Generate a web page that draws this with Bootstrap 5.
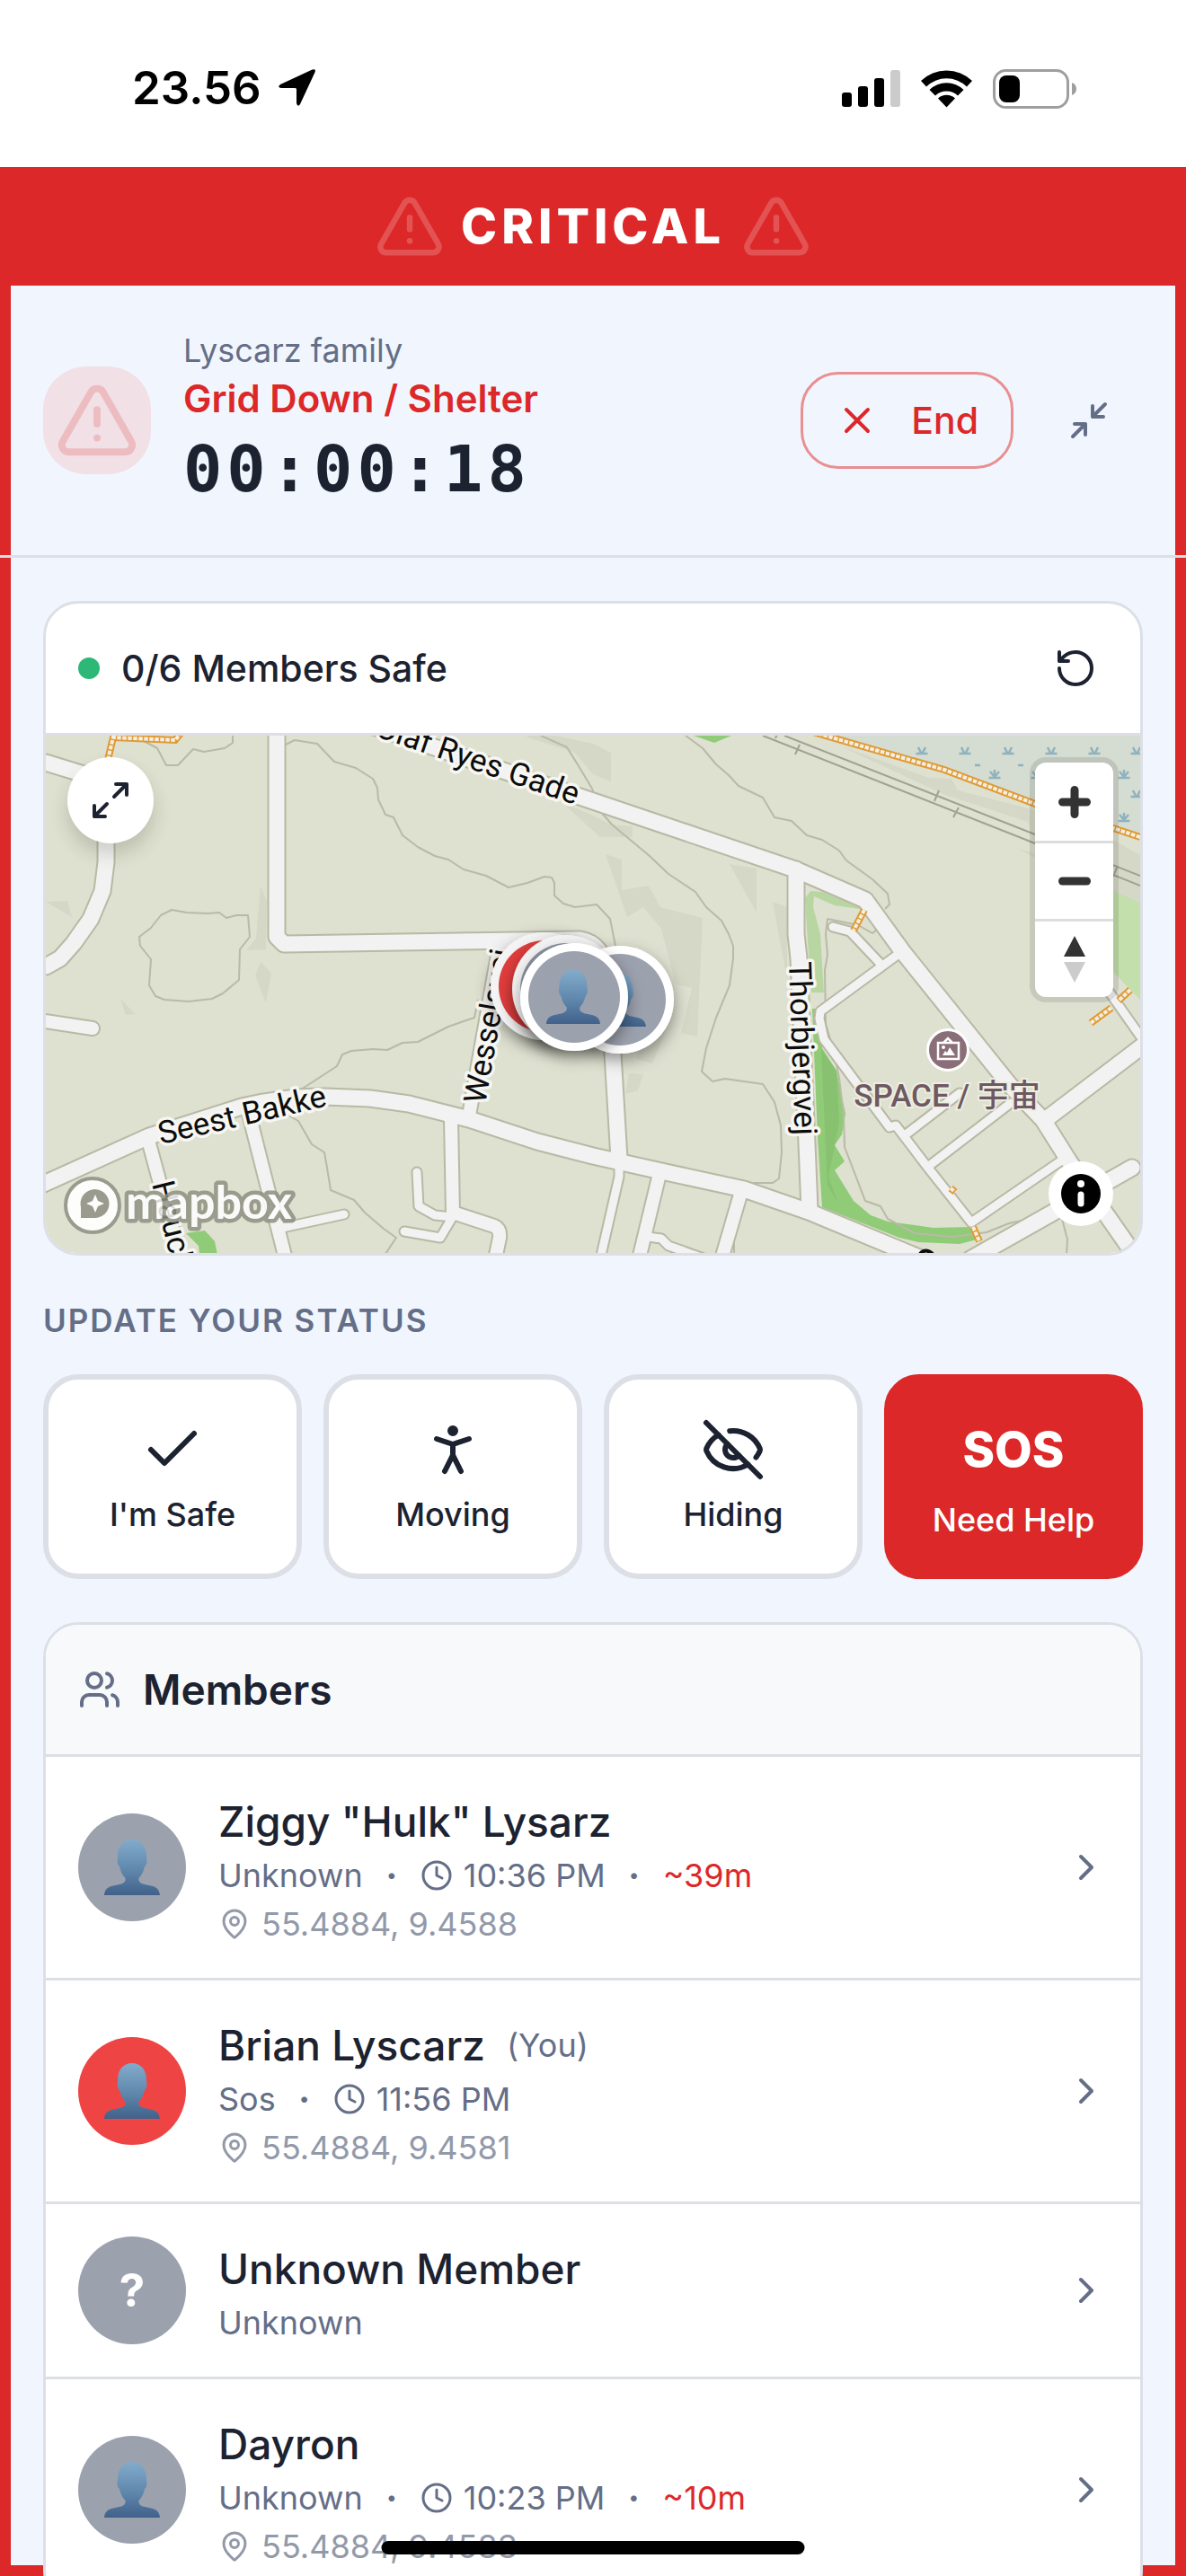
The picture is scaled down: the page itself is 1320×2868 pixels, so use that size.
<!DOCTYPE html>
<html lang="en">
<head>
<meta charset="utf-8">
<meta name="viewport" content="width=device-width, initial-scale=1">
<title>Critical – Grid Down / Shelter</title>
<link href="https://cdn.jsdelivr.net/npm/bootstrap@5.3.0/dist/css/bootstrap.min.css" rel="stylesheet">
<style>
  :root { --red: #dc2828; --ink: #1c2230; --muted-ink: #646e87; --line: #dcdfe6; --page: #f1f6fe; }
  body { font-family: Inter, "Liberation Sans", sans-serif; color: var(--ink); background: var(--page); font-size: 36px; line-height: 48px; }
  .phone { height: 100vh; overflow: hidden; }
  .ico { fill: none; stroke: currentColor; stroke-width: 2; stroke-linecap: round; stroke-linejoin: round; width: 48px; height: 48px; flex: none; display: block; }
  .ico-sm { width: 36px; height: 36px; }
  .ico-lg { width: 72px; height: 72px; }
  .plain { border: 0; background: none; padding: 0; color: inherit; }
  .ink-muted { color: var(--muted-ink); }
  .ink-red { color: var(--red); }

  .os-bar { height: 186px; padding: 9px 120px 0 147px; background: #fff; color: #000; }
  .os-time { font-size: 51px; font-weight: 600; line-height: 60px; }

  .alert-zone { background: var(--red); height: 132px; gap: 18px; color: #fff; }
  .alert-zone .ico { width: 78px; height: 78px; opacity: .2; }
  .alert-word { font-size: 54px; font-weight: 800; line-height: 84px; letter-spacing: 5px; }

  .stage { position: relative; height: calc(100vh - 318px); }
  .frame-lines { position: absolute; inset: 0; border: 12px solid var(--red); border-top: 0; pointer-events: none; }
  .stage-body { position: relative; }

  .incident { padding: 48px; gap: 36px; border-bottom: 3px solid var(--line); }
  .tile { width: 120px; height: 120px; border-radius: 48px; background: #f1e0e6; color: #edbcc0; flex: none; }
  .tile .ico { width: 94px; height: 94px; }
  .incident-name { font-size: 42px; line-height: 60px; font-weight: 600; }
  .clock-face { font-family: "DejaVu Sans Mono", monospace; font-size: 72px; line-height: 96px; font-weight: 700; letter-spacing: 5px; }
  .end-btn { height: 108px; border: 3px solid #e98f92; border-radius: 42px; padding: 0 36px; gap: 36px; font-size: 41px; font-weight: 500; background: none; color: var(--red); }
  .square-btn { width: 120px; height: 120px; }

  .content { padding: 48px; }
  .panel { border: 3px solid var(--line); border-radius: 39px; overflow: hidden; background: #fff; }
  .panel-top { padding: 0 36px; height: 147px; border-bottom: 3px solid var(--line); }
  .safe-dot { width: 24px; height: 24px; background: #2eb877; border-radius: 50%; }
  .safe-count { font-size: 41px; font-weight: 500; line-height: 60px; }
  .refresh { padding: 0 12px; }

  .map-box { position: relative; height: 576px; background: #dee0d0; overflow: hidden; }
  .map-box > svg { width: 100%; height: 100%; display: block; }
  .map-expand { position: absolute; left: 24px; top: 24px; width: 96px; height: 96px; border-radius: 50%; background: #fff; box-shadow: 0 12px 20px rgba(60,60,40,.2); }
  .map-zoom { position: absolute; right: 30px; top: 30px; width: 87px; background: #fff; border-radius: 12px; box-shadow: 0 0 0 6px rgba(0,0,0,.1); }
  .map-zoom button { height: 87px; }
  .map-zoom button + button { border-top: 3px solid #ddd; }
  .map-info { position: absolute; right: 30px; bottom: 30px; width: 72px; height: 72px; border-radius: 50%; background: #fff; }

  .road-casing { fill: none; stroke: #b8b9a4; stroke-linejoin: round; stroke-linecap: round; }
  .road-fill { fill: none; stroke: #f2f2f2; stroke-linejoin: round; stroke-linecap: round; }
  .contour { fill: none; stroke: #b9baa6; stroke-width: 2; stroke-linejoin: round; }
  .street { font-family: Roboto, sans-serif; font-size: 35px; fill: #0c0c0c; stroke: #f6f6f2; stroke-width: 7px; stroke-linejoin: round; paint-order: stroke; }
  .poi { font-family: Roboto, "Noto Sans CJK JP", sans-serif; font-size: 35px; font-weight: 500; fill: #6f5861; stroke: #eceee2; stroke-width: 4px; paint-order: stroke; }
  .wordmark { font-family: Lato, sans-serif; font-weight: 700; font-size: 52px; fill: #fff; stroke: #8f9082; stroke-width: 9px; stroke-linejoin: round; paint-order: stroke; opacity: .85; }

  .section-label { font-size: 35px; line-height: 48px; font-weight: 600; letter-spacing: 2px; margin: 48px 0 36px; color: var(--muted-ink); }
  .status-grid { display: grid; grid-template-columns: repeat(4, 1fr); gap: 24px; margin-bottom: 48px; }
  .status-btn { height: 228px; border: 6px solid var(--line); border-radius: 39px; background: #fff; color: var(--ink); font-weight: 500; gap: 12px; padding: 0; }
  .status-btn.sos { background: var(--red); border-color: var(--red); color: #fff; }
  .sos-word { font-size: 54px; line-height: 84px; font-weight: 800; }

  .members-top { background: #f7f9fb; gap: 24px; }
  .members-title { font-size: 46px; line-height: 72px; font-weight: 600; margin: 0; }
  .person { display: flex; align-items: center; gap: 36px; padding: 36px; color: inherit; text-decoration: none; border-bottom: 3px solid var(--line); }
  .face { width: 120px; height: 120px; border-radius: 50%; background: #9ca1ae; color: #fff; font-size: 51px; font-weight: 700; flex: none; }
  .face svg { width: 62px; height: 62px; }
  .face.hot { background: #ef4444; }
  .person-name { font-size: 46px; line-height: 72px; font-weight: 500; gap: 24px; }
  .person-name small { font-size: 36px; line-height: 48px; font-weight: 400; }
  .meta { gap: 24px; height: 48px; }
  .stamp { gap: 12px; }
  .sep { width: 16px; text-align: center; font-weight: 800; }
  .place { gap: 12px; margin-top: 6px; color: #9299a9; }
  .home-pill { position: absolute; left: 50%; bottom: 24px; transform: translateX(-50%); width: 471px; height: 15px; border-radius: 8px; background: #000; }
</style>
<script src="https://cdn.jsdelivr.net/npm/bootstrap@5.3.0/dist/js/bootstrap.bundle.min.js"></script>
</head>
<body>
<svg width="0" height="0" class="position-absolute" aria-hidden="true">
  <defs>
    <linearGradient id="bustFill" x1="0" y1="0" x2="0" y2="1"><stop offset="0" stop-color="#82abcb"/><stop offset=".55" stop-color="#5f87ac"/><stop offset="1" stop-color="#41618a"/></linearGradient>
    <symbol id="bust" viewBox="0 0 62 62"><path fill="url(#bustFill)" d="M31 0c10 0 16 8 16 18 0 2 0 3 .5 5 .3 3-1 6-2.500 7-1.500 7-4 10-6.500 13-.5 3 .5 5 4.500 6.500C52 52 61 51 62 62H0C1 51 10 52 19 49.500 23 48 24 46 23.500 43 21 40 18.500 37 17 30c-1.500-1-2.800-4-2.500-7 .5-2 .5-3 .5-5C15 8 21 0 31 0z"/></symbol>
    <symbol id="warn" viewBox="0 0 24 24"><path d="m21.730 18-8-14a2 2 0 0 0-3.480 0l-8 14A2 2 0 0 0 4 21h16a2 2 0 0 0 1.730-3M12 9v4M12 17h.01"/></symbol>
    <symbol id="clock" viewBox="0 0 24 24"><circle cx="12" cy="12" r="10"/><path d="M12 6v6l4 2"/></symbol>
    <symbol id="pin" viewBox="0 0 24 24"><path d="M20 10c0 4.993-5.539 10.193-7.399 11.799a1 1 0 0 1-1.202 0C9.539 20.193 4 14.993 4 10a8 8 0 0 1 16 0"/><circle cx="12" cy="10" r="3"/></symbol>
    <symbol id="next" viewBox="0 0 24 24"><path d="m9 18 6-6-6-6"/></symbol>
  </defs>
</svg>

<div class="phone position-relative">
  <div class="os-bar d-flex align-items-center justify-content-between">
    <div class="d-flex align-items-center gap-3">
      <span class="os-time">23.56</span>
      <svg width="46" height="46" viewBox="0 0 46 46"><path d="M40.500 2.500Q45 1 43.500 5.500L27 41Q24.500 45 23 40V24.500Q23 23 21.500 23H6Q1 22 5 19z"/></svg>
    </div>
    <svg width="264" height="48" viewBox="936 72 264 48" aria-label="Signal, Wi-Fi and battery">
      <rect x="937" y="101" width="11" height="16" rx="3"/><rect x="955" y="94" width="11" height="23" rx="3"/><rect x="973" y="85" width="11" height="32" rx="3"/><rect x="991" y="76" width="11" height="41" rx="3" fill="#cbcbcb"/>
      <path d="M1025 88a41 41 0 0 1 57 0l-6 6.500a32 32 0 0 0-45 0zM1034.500 98a27 27 0 0 1 38 0l-6.500 6.500a18 18 0 0 0-25 0zM1044 107.500a14 14 0 0 1 19 0L1053.500 117.500z"/>
      <rect x="1106.500" y="76.500" width="82" height="41" rx="13" fill="none" stroke="#9e9e9e" stroke-width="3"/><path d="M1193 90q5 2 5 7t-5 7z" fill="#9e9e9e"/><rect x="1112" y="82" width="23" height="30" rx="8"/>
    </svg>
  </div>

  <div class="alert-zone d-flex align-items-center justify-content-center">
    <svg class="ico"><use href="#warn"/></svg>
    <span class="alert-word">CRITICAL</span>
    <svg class="ico"><use href="#warn"/></svg>
  </div>

  <div class="stage">
    <div class="frame-lines"></div>
    <div class="stage-body">
      <header class="incident d-flex align-items-center">
        <div class="tile d-flex align-items-center justify-content-center"><svg class="ico"><use href="#warn"/></svg></div>
        <div class="flex-grow-1">
          <div class="ink-muted">Lyscarz family</div>
          <div class="incident-name ink-red">Grid Down / Shelter</div>
          <div class="clock-face">00:00:18</div>
        </div>
        <div class="d-flex align-items-center gap-4">
          <button class="end-btn d-flex align-items-center" type="button"><svg class="ico" viewBox="0 0 24 24"><path d="M18 6 6 18M6 6l12 12"/></svg>End</button>
          <button class="plain square-btn d-flex align-items-center justify-content-center ink-muted" type="button" aria-label="Minimize"><svg class="ico" viewBox="0 0 24 24"><path d="M4 14h6v6M20 10h-6V4M14 10l7-7M3 21l7-7"/></svg></button>
        </div>
      </header>

      <main class="content">
        <section class="panel">
          <div class="panel-top d-flex align-items-center gap-4">
            <span class="safe-dot"></span><span class="safe-count flex-grow-1">0/6 Members Safe</span>
            <button class="plain refresh" type="button" aria-label="Refresh"><svg class="ico" viewBox="0 0 24 24"><path d="M3 12a9 9 0 1 0 9-9 9.750 9.750 0 0 0-6.740 2.740L3 8M3 3v5h5"/></svg></button>
          </div>
          <div class="map-box">
            <svg viewBox="51 819 1218 576" preserveAspectRatio="xMidYMid slice">
              <defs>
                <filter id="soft" x="-50%" y="-50%" width="200%" height="200%"><feDropShadow dx="0" dy="7" stdDeviation="9" flood-opacity=".4"/></filter>
                <g id="reed" fill="none" stroke="#8fb2c0" stroke-width="2.500"><path d="M-6.500 5h13M0 5v-9M0 4l-5-6M0 4l5-6"/></g>
                <g id="tuft" fill="none" stroke="#8fb2c0" stroke-width="2.500"><path d="M-6.500 4h13M-4-3l3 6M4-3L1 3"/></g>
                <g id="majorRoads">
                  <path d="M51 849 90 861Q118 868 118 910V960L114 992 101 1023 82 1050 67 1067 51 1076"/>
                  <path d="M308 810V1043L316 1051 645 1046Q672 1050 678 1090L682 1173 689 1290"/>
                  <path d="M410 807 660 892 885 968 963 1002 1005 1060 1123 1207 1161 1247 1190 1293 1266 1402"/>
                  <path d="M886 968V1040L889 1067 898 1273 901 1347"/>
                  <path d="M40 1322 166 1265 269 1232Q320 1220 362 1221L412 1223 455 1229 522 1246 598 1271 660 1287 736 1304 828 1324 900 1349 1030 1403"/>
                  <path d="M1163 1247 1280 1158"/><path d="M1080 1402 1186 1342 1260 1300"/>
                </g>
                <g id="midRoads">
                  <path d="M556 1052 522 1242"/><path d="M30 1134 103 1145"/><path d="M166 1273 201 1402"/><path d="M277 1240 318 1402"/>
                  <path d="M502 1245 504 1350 550 1365Q557 1368 556 1378L551 1402"/><path d="M734 1307 711 1402"/><path d="M824 1330 803 1402"/>
                </g>
                <g id="minorRoads">
                  <path d="M314 1367 383 1352"/><path d="M464 1305 466 1343 484 1353 504 1355"/><path d="M450 1371 490 1378 503 1356"/>
                  <path d="M689 1300V1310L668 1402"/><path d="M721 1377 736 1379 744 1387 786 1402"/>
                  <path d="M927 1032 946 1037 979 1072"/><path d="M1003 1060 913 1126 912 1134 917 1157 990 1255 997 1253 1032 1299 1081 1361 1180 1293"/>
                  <path d="M1007 1264 1068 1217"/><path d="M1034 1298 1125 1228"/><path d="M1228 1095 1275 1162"/>
                </g>
                <g id="paths">
                  <path d="M120 846 126 821 195 824 203 814"/><path d="M905 815 960 831 1051 857 1152 895 1239 922 1269 932"/>
                  <path d="M962 1013 950 1036"/><path d="M1258 1102 1245 1114M1237 1122 1214 1139"/><path d="M1083 1366 1090 1382"/><path d="M1058 1323 1063 1327"/>
                </g>
              </defs>
              <rect x="0" y="700" width="1400" height="800" fill="#dee0d0"/>
              <g fill="#d6d8c7">
                <path d="M51 1004 75 1003 80 1021zM290 987 297 1003 296 1057 274 1058 285 1045zM290 1071 302 1083 296 1117 284 1086zM134 1112 151 1129 140 1130z"/>
                <path d="M585 820 600 815 660 828 680 838 680 870 660 862 640 838zM625 893 660 908 680 918 704 920 704 932 668 932z"/>
                <path d="M674 951 692 957 692 991 722 986 735 1010 782 1022 776 1154 758 1150 770 1100 752 1096 736 1034 716 1010 698 1021zM812 962 842 967 842 1016zM860 1004 876 1010 876 1090zM700 1195 716 1196 710 1214 696 1218zM725 1130 752 1120 726 1184 708 1179z"/>
                <path d="M934 830 1034 866 1059 867 1066 880 1152 902 1152 944 1144 915 1052 885zM1133 945 1152 950 1152 955zM1239 935 1269 952 1269 1005 1239 995z"/>
              </g>
              <path fill="#d5dcd1" d="M917 819 1051 857 1152 895 1269 932V819z"/>
              <g><use href="#tuft" x="1026" y="835"/><use href="#tuft" x="1074" y="835"/><use href="#tuft" x="1122" y="835"/><use href="#tuft" x="1170" y="835"/><use href="#tuft" x="1218" y="835"/><use href="#tuft" x="1265" y="835"/><use href="#reed" x="1107" y="861"/><use href="#reed" x="1154" y="861"/><use href="#reed" x="1251" y="861"/><use href="#tuft" x="1265" y="883"/><use href="#reed" x="1251" y="909"/><path d="M1085 852h6M1133 852h6M1037 852h6" stroke="#8fb2c0" stroke-width="2.500"/></g>
              <path fill="#90cc78" d="M772 819 795 827 814 819zM207 1373 228 1370 239 1382 242 1397H222L221 1387z"/>
              <path fill="#b8d6a1" d="M896 1000 902 992 915 993 963 1013 929 1008 906 998 905 1010 913 1040 917 1105H903L898 1033z"/>
              <path fill="#c3dfab" d="M1239 992 1269 1005V1113L1239 1082z"/>
              <path fill="#90cb78" d="M904 1123H911L915 1167 931 1192 941 1240 937 1263 929 1275 940 1293 929 1303 950 1337 969 1353 988 1360 1039 1367 1081 1366 1087 1380 1068 1385 1022 1383 1001 1378 915 1344 910 1267z"/>
              <path fill="#84bd6d" opacity=".7" d="M914 1168 931 1192 934 1250 922 1310 932 1338 921 1320z"/>
              <g class="contour">
                <path d="M160 825 175 833 185 852 198 852 215 834 227 837 250 833 259 827V819"/>
                <path d="M316 830 328 824 353 828 372 848 396 855 415 867 420 877 421 890 429 907 438 910 448 930 465 943 484 953 499 957 516 968 541 975 566 988 587 983 606 976 614 977 617 983V997L627 1006 640 1010 664 1007 679 1023 685 1053"/>
                <path d="M602 819 631 832 644 853 659 878 668 903 681 918 723 953 744 973 774 993 786 1010 803 1025 811 1040 816 1053V1067L812 1097 797 1133 786 1167 781 1193 793 1204 807 1201 849 1207 862 1227 869 1253 870 1283 867 1312 860 1317H837"/>
                <path d="M763 819 782 833 797 851 811 863 822 875 849 888 862 910 881 914 898 930 915 935 934 947 942 958 971 979 988 995 990 1007 985 1012"/>
                <path d="M191 1013 179 1019 168 1033 155 1043 156 1053 168 1068 166 1097 173 1109 183 1113 210 1115 236 1112 248 1106 266 1091 267 1057 278 1043 276 1019H263L252 1022 244 1016 231 1017 208 1016z"/>
                <path d="M335 1213 375 1187 381 1174 391 1170 415 1168 431 1169 448 1161 465 1160 499 1143 516 1137 528 1133 532 1113"/>
                <path d="M318 1240 332 1248 347 1274 361 1283 364 1300 368 1325 394 1336 406 1350 427 1368 441 1378 429 1396"/>
                <path d="M976 1035 971 1039 955 1030 921 1023 919 1040 921 1063 918 1080 919 1140 927 1167 934 1200 939 1243 940 1277 950 1303 963 1337 980 1343 988 1357 1018 1373 1060 1377 1098 1372 1123 1362 1165 1353M1182 1357 1188 1380 1187 1397M817 1340V1397"/>
              </g>
              <path d="M849 819 1152 939 1269 986M873 819 1152 929 1269 975M890 829 885 840M1045 880 1040 892M1067 899 1061 910M1243 966 1239 976M866 815 863 822" fill="none" stroke="#a1a292" stroke-width="2"/>
              <use href="#minorRoads" class="road-casing" stroke-width="13"/>
              <use href="#midRoads" class="road-casing" stroke-width="18"/>
              <use href="#majorRoads" class="road-casing" stroke-width="21"/>
              <use href="#minorRoads" class="road-fill" stroke-width="9"/>
              <use href="#midRoads" class="road-fill" stroke-width="14"/>
              <use href="#majorRoads" class="road-fill" stroke-width="17"/>
              <g fill="none"><use href="#paths" stroke="#e19a33" stroke-width="8"/><use href="#paths" stroke="#f3efe4" stroke-width="4" stroke-dasharray="4.500 1.500"/></g>
              <text class="street" transform="translate(416 819) rotate(19)">Olaf Ryes Gade</text>
              <text class="street" transform="translate(179 1274) rotate(-13)">Seest Bakke</text>
              <text class="street" transform="translate(540 1230) rotate(-80)">Wesselsvej</text>
              <text class="street" transform="translate(878 1071) rotate(88)">Thorbjergvej</text>
              <text class="street" transform="translate(169 1318) rotate(76)">Hauch</text>
              <path d="M1024 1396q6-7 14 0" fill="none" stroke="#0c0c0c" stroke-width="4"/>
              <circle cx="1055" cy="1169" r="22.500" fill="#8b6f78" stroke="#fff" stroke-width="3"/>
              <g fill="none" stroke="#fff" stroke-width="2.500"><path d="M1044 1161h23v18h-23zM1050 1161l5-5 5 5"/><path d="M1049 1175l3-5 2 2 3-6 6 9z" fill="#fff" stroke="none"/><circle cx="1050" cy="1166" r="2" fill="#fff" stroke="none"/></g>
              <text class="poi" x="1054" y="1232" text-anchor="middle">SPACE / 宇宙</text>
              <g filter="url(#soft)"><circle cx="606" cy="1098" r="60" fill="#f4f4f4"/><circle cx="606" cy="1098" r="51" fill="#e23e3e"/></g>
              <g filter="url(#soft)"><circle cx="630" cy="1101" r="60" fill="#f4f4f4"/><circle cx="630" cy="1101" r="51" fill="#8d93a3"/></g>
              <g filter="url(#soft)"><circle cx="690" cy="1113" r="60" fill="#fff"/><circle cx="690" cy="1113" r="51" fill="#9ca1ae"/><use href="#bust" x="659" y="1083" width="60" height="60"/></g>
              <g filter="url(#soft)"><circle cx="639" cy="1110" r="60" fill="#fff"/><circle cx="639" cy="1110" r="51" fill="#9ca1ae"/></g>
              <use href="#bust" x="608" y="1080" width="60" height="60"/>
              <circle cx="103" cy="1342" r="30" fill="#fdfdfb" stroke="#9a9b8e" stroke-width="4"/>
              <path d="M90 1356v-12a16 16 0 1 1 17 12zM106 1330l-3 7-7 3 7 3 3 7 3-7 7-3-7-3z" fill="#9a9b8e" fill-rule="evenodd"/>
              <text class="wordmark" x="140" y="1357">mapbox</text>
            </svg>
            <button class="plain map-expand d-flex align-items-center justify-content-center" type="button" aria-label="Expand map"><svg class="ico" viewBox="0 0 24 24"><path d="M15 3h6v6M9 21H3v-6M21 3l-7 7M3 21l7-7"/></svg></button>
            <div class="map-zoom d-flex flex-column">
              <button class="plain d-flex align-items-center justify-content-center" type="button" aria-label="Zoom in"><svg width="36" height="36" viewBox="0 0 36 36"><path d="M18 4.500v27M4.500 18h27" stroke="#333" stroke-width="9" stroke-linecap="round"/></svg></button>
              <button class="plain d-flex align-items-center justify-content-center" type="button" aria-label="Zoom out"><svg width="36" height="36" viewBox="0 0 36 36"><path d="M4.500 18h27" stroke="#333" stroke-width="9" stroke-linecap="round"/></svg></button>
              <button class="plain d-flex align-items-center justify-content-center" type="button" aria-label="Reset bearing"><svg width="24" height="52" viewBox="0 0 24 52"><path d="M12 0l12 23H0z" fill="#333"/><path d="M0 29h24L12 52z" fill="#ccc"/></svg></button>
            </div>
            <button class="plain map-info d-flex align-items-center justify-content-center" type="button" aria-label="Map attribution"><svg width="44" height="44" viewBox="0 0 44 44"><circle cx="22" cy="22" r="22"/><circle cx="22" cy="11" r="4" fill="#fff"/><path d="M22 23v10" stroke="#fff" stroke-width="7" stroke-linecap="round"/></svg></button>
          </div>
        </section>

        <h2 class="section-label">UPDATE YOUR STATUS</h2>
        <div class="status-grid">
          <button class="status-btn d-flex flex-column align-items-center justify-content-center" type="button"><svg class="ico ico-lg" viewBox="0 0 24 24"><path d="M20 6 9 17l-5-5"/></svg>I'm Safe</button>
          <button class="status-btn d-flex flex-column align-items-center justify-content-center" type="button"><svg class="ico ico-lg" viewBox="0 0 24 24"><circle cx="12" cy="5" r="1"/><path d="m9 20 3-6 3 6M6 8l6 2 6-2M12 10v4"/></svg>Moving</button>
          <button class="status-btn d-flex flex-column align-items-center justify-content-center" type="button"><svg class="ico ico-lg" viewBox="0 0 24 24"><path d="M10.733 5.076a10.744 10.744 0 0 1 11.205 6.575 1 1 0 0 1 0 .696 10.747 10.747 0 0 1-1.444 2.490"/><path d="M14.084 14.158a3 3 0 0 1-4.242-4.242"/><path d="M17.479 17.499a10.750 10.750 0 0 1-15.417-5.151 1 1 0 0 1 0-.696 10.750 10.750 0 0 1 4.446-5.143"/><path d="m2 2 20 20"/></svg>Hiding</button>
          <button class="status-btn sos d-flex flex-column align-items-center justify-content-center" type="button"><span class="sos-word">SOS</span>Need Help</button>
        </div>

        <section class="panel">
          <div class="panel-top members-top d-flex align-items-center">
            <svg class="ico ink-muted" viewBox="0 0 24 24"><path d="M16 21v-2a4 4 0 0 0-4-4H6a4 4 0 0 0-4 4v2"/><circle cx="9" cy="7" r="4"/><path d="M22 21v-2a4 4 0 0 0-3-3.870M16 3.130a4 4 0 0 1 0 7.750"/></svg>
            <h2 class="members-title">Members</h2>
          </div>
          <a class="person" href="#ziggy">
            <span class="face d-flex align-items-center justify-content-center"><svg><use href="#bust"/></svg></span>
            <span class="flex-grow-1">
              <span class="person-name d-flex align-items-center">Ziggy "Hulk" Lysarz</span>
              <span class="meta d-flex align-items-center ink-muted"><span>Unknown</span><span class="sep">·</span><span class="stamp d-flex align-items-center"><svg class="ico ico-sm"><use href="#clock"/></svg>10:36 PM</span><span class="sep">·</span><span class="ink-red">~39m</span></span>
              <span class="place d-flex align-items-center"><svg class="ico ico-sm"><use href="#pin"/></svg>55.4884, 9.4588</span>
            </span>
            <svg class="ico ink-muted"><use href="#next"/></svg>
          </a>
          <a class="person" href="#brian">
            <span class="face hot d-flex align-items-center justify-content-center"><svg><use href="#bust"/></svg></span>
            <span class="flex-grow-1">
              <span class="person-name d-flex align-items-center">Brian Lyscarz <small class="ink-muted">(You)</small></span>
              <span class="meta d-flex align-items-center ink-muted"><span>Sos</span><span class="sep">·</span><span class="stamp d-flex align-items-center"><svg class="ico ico-sm"><use href="#clock"/></svg>11:56 PM</span></span>
              <span class="place d-flex align-items-center"><svg class="ico ico-sm"><use href="#pin"/></svg>55.4884, 9.4581</span>
            </span>
            <svg class="ico ink-muted"><use href="#next"/></svg>
          </a>
          <a class="person" href="#unknown">
            <span class="face d-flex align-items-center justify-content-center">?</span>
            <span class="flex-grow-1">
              <span class="person-name d-flex align-items-center">Unknown Member</span>
              <span class="meta d-flex align-items-center ink-muted"><span>Unknown</span></span>
            </span>
            <svg class="ico ink-muted"><use href="#next"/></svg>
          </a>
          <a class="person" href="#dayron">
            <span class="face d-flex align-items-center justify-content-center"><svg><use href="#bust"/></svg></span>
            <span class="flex-grow-1">
              <span class="person-name d-flex align-items-center">Dayron</span>
              <span class="meta d-flex align-items-center ink-muted"><span>Unknown</span><span class="sep">·</span><span class="stamp d-flex align-items-center"><svg class="ico ico-sm"><use href="#clock"/></svg>10:23 PM</span><span class="sep">·</span><span class="ink-red">~10m</span></span>
              <span class="place d-flex align-items-center"><svg class="ico ico-sm"><use href="#pin"/></svg>55.4884, 9.4583</span>
            </span>
            <svg class="ico ink-muted"><use href="#next"/></svg>
          </a>
        </section>
      </main>
    </div>
  </div>
  <div class="home-pill"></div>
</div>
</body>
</html>
